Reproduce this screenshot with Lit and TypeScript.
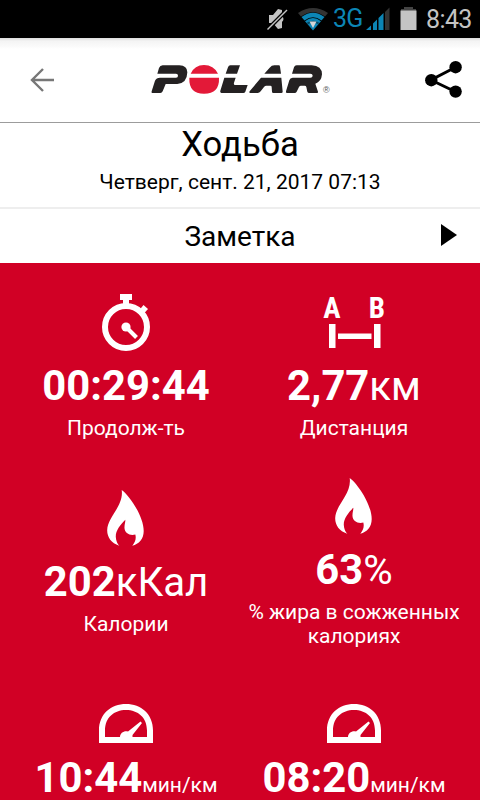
import { LitElement, html, css, svg, nothing } from "lit";
import { customElement, property } from "lit/decorators.js";

type IconName = "stopwatch" | "distance" | "flame" | "gauge";

interface Metric {
  icon: IconName;
  value: string;
  unit?: string;
  smallUnit?: boolean;
  label?: string;
}

const metrics: Metric[] = [
  { icon: "stopwatch", value: "00:29:44", label: "Продолж-ть" },
  { icon: "distance", value: "2,77", unit: "км", label: "Дистанция" },
  { icon: "flame", value: "202", unit: "кКал", label: "Калории" },
  { icon: "flame", value: "63", unit: "%", label: "% жира в сожженных калориях" },
  { icon: "gauge", value: "10:44", unit: "мин/км", smallUnit: true },
  { icon: "gauge", value: "08:20", unit: "мин/км", smallUnit: true },
];

// Every metric icon is drawn on a 60x60 grid.
const icons = {
  stopwatch: svg`
    <circle cx="30" cy="35" r="21" fill="none" stroke="#fff" stroke-width="6"/>
    <path d="M24 2h12v6h-3v6h-6V8h-3z"/>
    <path d="M43 18.500l4.500-5.500 4.500 4-4.500 5z"/>
    <circle cx="30" cy="35" r="4.600"/>
    <path d="M30 35l10.500 10.500" stroke="#fff" stroke-width="4"/>`,
  distance: svg`
    <text class="mark" x="8" y="25.500">A</text>
    <text class="mark" x="53" y="25.500">B</text>
    <path d="M5 32h6.500v24H5zM50 32h6.500v24H50zM14 41.500h33.500v5.500H14z"/>`,
  flame: svg`
    <path d="M25.700 2C33 7 47.700 28 47.700 43C47.700 51 43 56 36.300 57.700C39 54.500 40.500 51 39.300 46.500C34 48 28 45 28.500 39C28.500 36 29.500 34 29.300 31.800C24 37 19.500 43 19.800 49C20 53 21.500 56 23.300 57.700C15 55 11 49 11.200 42C11.500 29 28 18 25.700 2Z"/>`,
  gauge: svg`
    <path fill-rule="evenodd" d="M3 59V46.500C3 30 15 20 30 20S57 30 57 46.500V59zM9 53H24C24 49 28 46.500 32 47.500L44.500 37.500 46 39 36.500 51V53H51V46.500C51 33.500 42 26 30 26S9 33.500 9 46.500z"/>`,
};

@customElement("status-bar")
export class StatusBar extends LitElement {
  static styles = css`
    :host {
      display: flex;
      align-items: center;
      justify-content: flex-end;
      height: 38px;
      background: #000;
      color: #c4c4c4;
      flex: none;
      padding-right: 9px;
      font: 25px/38px Roboto, sans-serif;
    }
    .mute { margin-right: 10px; }
    .wifi { margin-right: 5px; }
    .net { color: #0c85b5; width: 28px; margin-right: 5px; letter-spacing: -0.8px; line-height: 36px; }
    .signal { margin-right: 10px; }
    .battery { margin-right: 9px; }
    .clock { width: 45px; letter-spacing: -0.6px; padding-top: 1px; white-space: nowrap; }
    svg { display: block; flex: none; }
  `;
  render() {
    return html`
      <svg class="mute" width="21" height="24" viewBox="0 0 21 24">
        <path fill="#c4c4c4" d="M2 8h4l5-6 4 1v6q3 3 0 6v6l-4 1-5-6H2z" />
        <path stroke="#000" stroke-width="4" d="M1 22L20 3" />
        <path stroke="#c4c4c4" stroke-width="1.500" d="M.5 22.500L20 3" />
      </svg>
      <svg class="wifi" width="30" height="24" viewBox="0 0 30 24">
        <path fill="#333" d="M0 6Q15 -4 30 6L27 9.500Q15 1 3 9.500z" />
        <path fill="#0c85b5" d="M3.500 10Q15 1.500 26.500 10L23.500 13.500Q15 7 6.500 13.500zM7 14.200Q15 8 23 14.200L15 23.500z" />
        <path fill="#054a66" d="M8.700 15.800Q15 11.500 21.300 15.800L20 17.200Q15 14 10 17.200z" />
        <path fill="#d6d6d6" d="M11.500 14.500h7L15 21z" />
      </svg>
      <span class="net">3G</span>
      <svg class="signal" width="24" height="24" viewBox="0 0 24 24">
        <path fill="#0c85b5" d="M0 23l5-4.500V23zM7 16.500l4-4V23H7zM12.500 11l5-5v17h-5z" />
        <path fill="#333" d="M19 5l4.500-4.500V23H19z" />
      </svg>
      <svg class="battery" width="17" height="24" viewBox="0 0 17 24">
        <path fill="#444" d="M1 2h3V0h9v2h3v2H1z" />
        <path fill="#c4c4c4" d="M.5 3.500h16V23H.5z" />
      </svg>
      <span class="clock">8:43</span>
    `;
  }
}

@customElement("brand-bar")
export class BrandBar extends LitElement {
  static styles = css`
    :host {
      display: flex;
      align-items: center;
      height: 85px;
      box-sizing: border-box;
      flex: none;
      padding: 0 18px 1px 30px;
      border-bottom: 1px solid #9c9c9c;
      background: linear-gradient(#dcdcdc, #f4f4f4 3px, #fafafa 8px, #fff 11px);
    }
    .logo { margin-left: 96px; }
    .share { margin-left: auto; }
    .reg { font: 27px "Liberation Sans", sans-serif; fill: #555; }
    svg { display: block; flex: none; }
  `;
  render() {
    return html`
      <svg class="back" width="24" height="24" viewBox="0 0 24 24" fill="none" stroke="#777" stroke-width="2.400">
        <path d="M24 12H2.500M13 1L2 12L13 23" />
      </svg>
      <svg class="logo" width="182" height="32" viewBox="450 72 546 96" fill="#242122">
        <path d="M472 101L477 84Q480 76 488 76H538Q562 77 562 97Q561 130 532 132H497L488 154Q486 159 481 159H457Q453 159 455 154L465 122Q469 113 480 113H528Q534 113 534 107Q534 101 528 101z" />
        <path fill="#e31938" d="M572 101Q584 75 612 75Q641 75 654 101zM568 113H657Q659 161 612 161Q566 161 568 113z" />
        <path d="M677 101L684 82Q686 76 691 76H720L711 101zM673 113H707L702 128Q700 135 707 135H743L736 155Q734 159 730 159H668Q659 159 661 152z" />
        <path d="M793 101L809 83Q815 76 823 76H836Q840 76 840 80L843 101zM783 113H844L848 155Q848 159 844 159H820Q816 159 816 155L815 141Q815 137 811 137H799Q795 137 792 141L782 154Q778 159 773 159H751Q746 158 749 154z" />
        <path d="M876 101L882 82Q884 76 890 76H935Q966 78 966 103Q964 126 946 131L954 155Q955 159 951 159H928Q923 159 922 155L919 141Q918 137 914 137H903Q899 137 897 141L890 155Q888 159 884 159H861Q856 159 858 154L868 121Q870 113 878 113H931Q938 113 938 107Q938 101 931 101z" />
        <text class="reg" x="969" y="159">®</text>
      </svg>
      <svg class="share" width="37" height="37" viewBox="0 0 37 37">
        <path d="M31 6L6 19L31 31" fill="none" stroke="#000" stroke-width="3" />
        <circle cx="30.600" cy="6.200" r="6.200" />
        <circle cx="6.300" cy="19.200" r="6.200" />
        <circle cx="30.600" cy="30.600" r="6.200" />
      </svg>
    `;
  }
}

@customElement("metric-tile")
export class MetricTile extends LitElement {
  @property({ attribute: false }) metric!: Metric;
  static styles = css`
    :host {
      display: flex;
      flex-direction: column;
      align-items: center;
      justify-content: center;
      text-align: center;
      color: #fff;
    }
    .icon { display: block; fill: #fff; overflow: visible; }
    .mark { font: bold 29px "Roboto Condensed", "Liberation Sans Narrow", Roboto, sans-serif; text-anchor: middle; }
    .value { margin-top: 9px; height: 49px; font-size: 41.8px; line-height: 49px; white-space: nowrap; }
    .number { font-weight: 700; }
    .unit { font-size: 40.2px; line-height: 1; }
    .small { font-size: 21px; line-height: 1; }
    .label { margin-top: 6px; min-height: 24px; font-size: 21px; line-height: 24px; }
  `;
  render() {
    const m = this.metric;
    return html`
      <svg class="icon" width="60" height="60" viewBox="0 0 60 60">${icons[m.icon]}</svg>
      <div class="value"><span class="number">${m.value}</span>${m.unit
        ? html`<span class=${m.smallUnit ? "small" : "unit"}>${m.unit}</span>`
        : nothing}</div>
      <div class="label">${m.label ?? nothing}</div>
    `;
  }
}

@customElement("app-root")
export class AppRoot extends LitElement {
  static styles = css`
    :host {
      display: flex;
      flex-direction: column;
      height: 800px;
      overflow: hidden;
      background: #fff;
      color: #000;
      font-family: Roboto, "Noto Sans", sans-serif;
    }
    .heading { flex: none; height: 84px; text-align: center; }
    .title { font-size: 34.6px; line-height: 43px; }
    .date { margin-top: 4px; font-size: 21px; line-height: 24px; }
    .note {
      flex: none;
      display: grid;
      grid-template-columns: 1fr auto 1fr;
      align-items: center;
      height: 56px;
      box-sizing: border-box;
      border-top: 2px solid #eee;
      padding-right: 22px;
      padding-left: 22px;
      font-size: 28px;
      line-height: 33px;
    }
    .note span { grid-column: 2; }
    .play { justify-self: end; margin-bottom: 2px; }
    .metrics {
      flex: 1;
      min-height: 0;
      display: grid;
      grid-template-columns: 228px 228px;
      grid-auto-rows: 196px;
      padding: 5px 12px 0;
      background: #d10025;
    }
  `;
  render() {
    return html`
      <status-bar></status-bar>
      <brand-bar></brand-bar>
      <div class="heading">
        <div class="title">Ходьба</div>
        <div class="date">Четверг, сент. 21, 2017 07:13</div>
      </div>
      <div class="note">
        <span>Заметка</span>
        <svg class="play" width="17" height="22" viewBox="0 0 17 22"><path d="M0 0l16 11L0 22z" /></svg>
      </div>
      <div class="metrics">
        ${metrics.map((m) => html`<metric-tile .metric=${m}></metric-tile>`)}
      </div>
    `;
  }
}
